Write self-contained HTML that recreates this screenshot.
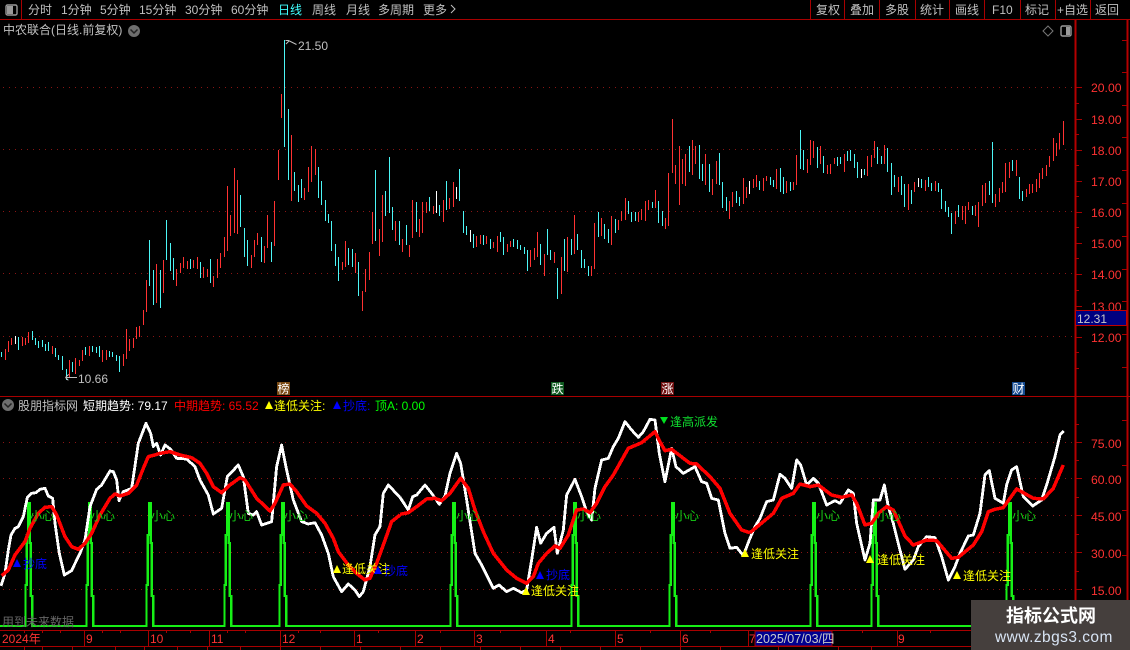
<!DOCTYPE html>
<html><head><meta charset="utf-8"><style>
html,body{margin:0;padding:0;background:#000;width:1130px;height:650px;overflow:hidden}
svg{display:block;position:absolute;left:0;top:0}
text{font-family:"Liberation Sans","WenQuanYi Zen Hei","Noto Sans CJK SC",sans-serif;font-size:12px}
.b{fill:none;stroke-width:1;shape-rendering:crispEdges}
.ax{fill:#ff3232;font-size:12.2px}
.t{fill:#c0c0c0}
.y{fill:#ffff00}.bl{fill:#0000ff}.g{fill:#00ff00}
.xin{fill:#16d016}
.d{fill:#ff3232;font-size:12px}
</style></head><body>
<svg width="1130" height="650" viewBox="0 0 1130 650">
<rect width="1130" height="650" fill="#000"/>
<!-- grid dotted -->
<g stroke="#8a1414" stroke-width="1" stroke-dasharray="1 5" shape-rendering="crispEdges">
<path d="M3 87.5H1075M3 149.5H1075M3 211.5H1075M3 273.5H1075M3 336.5H1075M3 442.5H1075M3 478.5H1075M3 515.5H1075M3 552.5H1075M3 589.5H1075"/>
</g>
<!-- candles -->
<path class="b" stroke="#ff3232" d="M5.5 349V360M8.5 341V352M11.5 338V345M22.5 337V346M25.5 338V345M28.5 332V343M52.5 346V354M69.5 360V377M75.5 358V374M79.5 360V366M82.5 350V361M89.5 346V356M102.5 350V362M106.5 350V360M123.5 354V366M126.5 329V359M129.5 339V351M133.5 338V348M136.5 327V339M139.5 326V337M143.5 310V325M146.5 280V312M156.5 264V303M163.5 260V293M176.5 269V286M180.5 263V273M183.5 257V268M187.5 261V269M193.5 260V268M197.5 257V269M203.5 267V278M207.5 269V277M213.5 276V287M217.5 259V278M220.5 253V268M224.5 237V257M227.5 186V251M230.5 215V236M234.5 168V233M237.5 180V234M251.5 255V268M254.5 240V257M257.5 233V245M264.5 246V263M267.5 215V248M274.5 201V246M278.5 150V180M281.5 94V118M291.5 135V201M304.5 188V200M308.5 167V192M311.5 146V182M315.5 149V175M342.5 262V270M345.5 241V267M355.5 253V273M362.5 291V311M365.5 269V292M369.5 252V280M372.5 212V244M379.5 229V256M382.5 195V242M395.5 221V241M402.5 239V252M409.5 245V257M412.5 200V238M419.5 219V237M422.5 202V233M426.5 202V213M433.5 206V214M443.5 200V222M449.5 198V209M453.5 182V207M476.5 236V247M480.5 235V244M486.5 236V244M493.5 242V248M497.5 236V252M507.5 244V252M510.5 241V247M530.5 250V267M534.5 248V260M537.5 232V257M544.5 254V276M554.5 252V263M561.5 257V294M567.5 237V272M574.5 215V254M591.5 266V276M594.5 223V269M601.5 218V236M611.5 216V245M618.5 220V230M621.5 211V221M625.5 198V220M638.5 212V222M641.5 209V220M645.5 201V221M648.5 200V210M655.5 190V208M665.5 218V229M668.5 173V226M672.5 119V173M675.5 165V184M679.5 146V205M682.5 159V184M685.5 154V186M692.5 140V175M695.5 146V164M705.5 154V185M712.5 179V195M716.5 161V184M729.5 201V219M732.5 192V207M743.5 178V204M746.5 187V198M753.5 179V188M756.5 175V187M763.5 178V191M766.5 176V181M776.5 169V189M786.5 181V193M793.5 182V190M796.5 155V185M807.5 159V173M810.5 140V165M813.5 141V158M820.5 146V164M827.5 165V174M830.5 164V174M834.5 158V164M844.5 154V172M867.5 156V176M871.5 155V167M874.5 141V158M884.5 145V164M898.5 177V192M908.5 184V210M914.5 182V192M925.5 180V191M935.5 181V191M955.5 211V224M962.5 206V220M965.5 206V224M968.5 202V210M975.5 205V216M978.5 202V227M982.5 185V206M985.5 183V203M995.5 194V207M999.5 188V202M1002.5 182V193M1005.5 163V192M1009.5 162V178M1016.5 160V176M1026.5 189V197M1029.5 184V194M1032.5 184V193M1036.5 179V192M1039.5 173V188M1042.5 168V179M1046.5 165V176M1049.5 156V167M1053.5 138V161M1056.5 143V156M1059.5 133V149M1063.5 121V145"/>
<path class="b" stroke="#4cf6f6" d="M1.5 352V357M18.5 337V350M32.5 331V340M35.5 338V345M38.5 341V348M42.5 340V347M45.5 344V351M48.5 342V351M55.5 348V357M58.5 355V360M62.5 356V370M66.5 369V380M72.5 362V372M85.5 347V355M92.5 346V352M96.5 347V353M99.5 346V357M109.5 351V357M112.5 352V357M116.5 355V361M119.5 356V372M149.5 240V286M153.5 270V305M160.5 270V308M166.5 220V260M170.5 243V271M173.5 258V280M190.5 259V269M200.5 262V278M210.5 259V283M240.5 195V227M244.5 228V257M247.5 240V266M261.5 237V262M271.5 242V262M284.5 40V147M288.5 109V180M294.5 172V191M298.5 185V202M301.5 179V198M318.5 167V198M321.5 181V205M325.5 200V221M328.5 214V223M331.5 221V251M335.5 244V266M338.5 257V281M348.5 248V265M352.5 249V267M358.5 262V296M375.5 170V241M385.5 191V216M389.5 157V213M392.5 207V230M399.5 221V245M406.5 225V245M416.5 202V232M429.5 197V211M439.5 205V216M446.5 181V210M459.5 169V201M463.5 211V233M466.5 226V235M473.5 234V248M483.5 235V245M490.5 239V249M500.5 232V242M503.5 237V255M513.5 239V247M517.5 240V249M520.5 245V250M524.5 247V254M527.5 250V271M540.5 244V265M547.5 229V255M550.5 250V260M557.5 268V299M564.5 239V271M571.5 239V255M577.5 234V250M581.5 250V268M584.5 259V268M588.5 266V276M598.5 212V237M604.5 224V239M608.5 229V243M615.5 219V233M628.5 201V214M631.5 212V222M635.5 212V221M652.5 202V208M658.5 201V223M662.5 211V226M689.5 146V172M699.5 145V179M702.5 164V181M709.5 164V192M719.5 153V185M722.5 182V208M726.5 197V211M736.5 191V203M739.5 197V206M759.5 181V190M770.5 177V185M773.5 180V187M780.5 168V192M783.5 177V194M790.5 182V191M800.5 130V169M803.5 150V170M817.5 147V168M823.5 156V173M837.5 157V166M840.5 157V164M847.5 151V161M850.5 150V161M854.5 154V168M857.5 162V178M864.5 169V175M877.5 147V164M881.5 156V164M887.5 148V172M891.5 163V195M894.5 175V187M901.5 176V195M904.5 184V207M911.5 190V204M921.5 179V188M928.5 177V187M931.5 183V191M938.5 183V192M941.5 189V209M945.5 201V212M948.5 207V217M951.5 213V234M958.5 205V217M972.5 206V215M989.5 181V195M992.5 142V203M1012.5 160V171M1019.5 177V199M1022.5 191V201"/>
<path class="b" stroke="#ffffff" d="M15.5 336V344M436.5 191V213M456.5 187V199M470.5 230V242M749.5 181V194M861.5 169V178M918.5 178V187"/>
<!-- extremes -->
<path d="M289 41l-3 3M285.5 40.5h3l8 4" fill="none" stroke="#c0c0c0" stroke-width="1"/>
<text x="298" y="50" class="t">21.50</text>
<path d="M65.5 377.5H77M65.5 377.5l3-3M65.5 377.5l3 3" fill="none" stroke="#c0c0c0" stroke-width="1" shape-rendering="crispEdges"/>
<text x="78" y="383" class="t">10.66</text>
<!-- signal badges -->
<rect x="277" y="382" width="13" height="13" fill="#7a4a14"/><text x="277.5" y="393" fill="#fff">榜</text>
<rect x="551" y="382" width="13" height="13" fill="#0f5a20"/><text x="551.5" y="393" fill="#fff">跌</text>
<rect x="661" y="382" width="13" height="13" fill="#701010"/><text x="661.5" y="393" fill="#fff">涨</text>
<rect x="1012" y="382" width="13" height="13" fill="#144a90"/><text x="1012.5" y="393" fill="#fff">财</text>
<!-- frame lines -->
<g stroke="#a80000" stroke-width="1" fill="none" shape-rendering="crispEdges">
<path d="M0 19.5H1130M21.5 0V19M810.5 0V19M844.5 0V19M879.5 0V19M915.5 0V19M949.5 0V19M984.5 0V19M1020.5 0V19M1055.5 0V19M1090.5 0V19"/>
<path d="M0 396.5H1130M0 630.5H971M0 646.5H971"/>
</g>
<g stroke="#b40000" stroke-width="1.6" fill="none" shape-rendering="crispEdges">
<path d="M1075.5 20V630M1127.5 20V650"/>
</g>
<g stroke="#a80000" stroke-width="1" fill="none" shape-rendering="crispEdges">
<path d="M1076 87.5h6M1076 119.5h6M1076 150.5h6M1076 181.5h6M1076 212.5h6M1076 243.5h6M1076 274.5h6M1076 306.5h6M1076 337.5h6M1076 103.5h3M1076 134.5h3M1076 165.5h3M1076 196.5h3M1076 227.5h3M1076 258.5h3M1076 290.5h3M1076 352.5h3M1076 368.5h3"/>
<path d="M1076 442.5h6M1076 478.5h6M1076 515.5h6M1076 552.5h6M1076 589.5h6M1076 424.5h3M1076 460.5h3M1076 497.5h3M1076 534.5h3M1076 571.5h3M1076 607.5h3"/>
<path d="M1122 40.5h5M1122 72.5h5M1122 105.5h5M1122 137.5h5M1122 170.5h5M1122 203.5h5M1122 236.5h5M1122 269.5h5M1122 301.5h5M1122 334.5h5M1122 367.5h5M1122 420.5h5M1122 465.5h5M1122 510.5h5M1122 555.5h5"/>
<path d="M24.5 630V633M42.5 630V633M60.5 630V633M84.5 630V646M102.5 630V633M120.5 630V633M148.5 630V646M166.5 630V633M190.5 630V633M209.5 630V646M227.5 630V633M245.5 630V633M280.5 630V646M298.5 630V633M320.5 630V633M354.5 630V646M378.5 630V633M415.5 630V646M440.5 630V633M474.5 630V646M500.5 630V633M546.5 630V646M570.5 630V633M615.5 630V646M650.5 630V633M680.5 630V646M710.5 630V633M748.5 630V646M790.5 630V633M862.5 630V633M897.5 630V646M930.5 630V633M24.5 646V650M42.5 646V650M72.5 646V650M115.5 646V650M144.5 646V650M177.5 646V650M207.5 646V650M240.5 646V650M280.5 646V650M320.5 646V650M360.5 646V650M400.5 646V650M440.5 646V650M480.5 646V650M520.5 646V650M560.5 646V650M600.5 646V650M640.5 646V650M680.5 646V650M720.5 646V650M778.5 646V650M838.5 646V650M871.5 646V650"/>
</g>
<!-- green spikes -->
<g fill="none" stroke="#16f016" stroke-width="2.4" shape-rendering="crispEdges">
<path d="M0 626H25.5V585H26.8V535H28V503H29.6V543H30.8V596H32.3V626H86.5V585H87.8V535H89V503H90.6V543H91.8V596H93.3V626H146.5V585H147.8V535H149V503H150.6V543H151.8V596H153.3V626H224.5V585H225.8V535H227V503H228.6V543H229.8V596H231.3V626H279.5V585H280.8V535H282V503H283.6V543H284.8V596H286.3V626H450.5V585H451.8V535H453V503H454.6V543H455.8V596H457.3V626H571.5V585H572.8V535H574V503H575.6V543H576.8V596H578.3V626H669.5V585H670.8V535H672V503H673.6V543H674.8V596H676.3V626H810.5V585H811.8V535H813V503H814.6V543H815.8V596H817.3V626H871.5V585H872.8V535H874V503H875.6V543H876.8V596H878.3V626H1006.5V585H1007.8V535H1009V503H1010.6V543H1011.8V596H1013.3V626H1030"/>
</g>
<!-- lines -->
<g fill="none" stroke-linejoin="round" shape-rendering="crispEdges">
<polyline transform="translate(0 410) scale(.3333)" stroke="#fff" stroke-width="8.5" fill="none" points="3,528 15,490 25,420 33,375 45,355 55,350 70,320 82,262 95,250 108,248 120,238 135,235 145,258 158,265 165,340 178,430 193,495 215,482 230,450 240,430 255,390 270,290 290,238 305,225 330,183 340,185 350,210 357,272 370,245 395,235 415,100 438,40 452,70 460,110 470,100 482,135 495,105 512,118 530,145 560,147 585,170 600,210 625,255 640,312 665,295 682,200 715,165 730,200 745,310 760,315 770,305 785,345 800,340 815,335 830,170 845,105 860,180 880,270 905,335 925,342 945,338 965,375 985,430 1000,500 1025,545 1045,522 1065,540 1078,560 1090,545 1110,470 1125,375 1140,350 1150,250 1165,225 1200,262"/>
<polyline transform="translate(400 410) scale(.3333)" stroke="#fff" stroke-width="8.5" fill="none" points="0,262 25,300 38,260 50,255 75,225 95,250 118,283 135,258 150,190 170,130 182,160 200,270 225,430 245,465 280,535 297,525 320,545 340,535 365,548 380,540 395,450 410,352 422,400 440,370 462,352 472,430 490,360 500,255 525,208 545,260 560,305 575,330 585,235 605,150 625,145 640,110 655,85 675,35 695,60 715,82 730,65 750,28 765,30 778,130 795,215 815,115 828,170 850,190 885,170 905,215 920,220 935,265 955,270 975,370 990,415 1010,412 1030,437 1050,385"/>
<polyline transform="translate(750 410) scale(.3333)" stroke="#fff" stroke-width="8.5" fill="none" points="0,385 15,350 30,325 50,275 70,270 90,193 105,205 125,235 140,150 152,165 170,225 190,205 205,220 230,285 255,272 270,280 295,240 310,250 320,340 345,450 360,400 370,270 390,270 403,225 415,290 430,340 450,420 465,478 490,450 505,410 530,380 555,383 575,440 595,510 615,470 630,430 655,378 670,375 690,310 705,195 718,182 735,265 760,280 770,225 785,180 800,170 820,260 848,288 875,270 890,225 915,140 930,75 942,63"/>
<polyline transform="translate(0 410) scale(.3333)" stroke="#f00" stroke-width="10.5" fill="none" points="5,497 25,480 45,435 75,395 90,355 115,310 135,292 155,290 170,315 195,380 215,410 235,418 255,400 275,370 300,315 330,265 345,252 360,258 385,250 410,225 430,175 445,140 465,135 480,130 510,125 540,135 575,143 600,160 620,190 640,230 665,248 690,225 720,203 735,210 770,265 810,303 825,280 850,225 870,222 890,245 920,288 950,310 975,340 1000,385 1015,425 1045,465 1070,490 1095,510 1110,505 1130,460 1150,405 1175,335 1200,315"/>
<polyline transform="translate(400 410) scale(.3333)" stroke="#f00" stroke-width="10.5" fill="none" points="0,313 25,308 50,290 80,267 105,265 125,272 150,250 182,205 205,235 225,300 250,365 280,430 320,480 350,505 380,520 400,500 415,460 440,430 465,408 480,415 505,375 530,300 550,297 570,308 590,280 615,230 640,195 685,115 725,98 765,65 780,95 795,122 815,118 870,160 890,162 930,200 960,235 990,310 1025,360 1050,368"/>
<polyline transform="translate(750 410) scale(.3333)" stroke="#f00" stroke-width="10.5" fill="none" points="0,368 40,335 70,310 95,265 130,250 150,222 180,230 205,225 245,255 275,262 305,255 320,280 345,345 365,340 385,310 410,290 430,300 465,378 490,405 530,390 560,392 605,445 625,442 670,405 695,365 715,305 735,298 760,293 800,237 850,265 880,267 910,235 940,165"/>
</g>
<!-- 小心 -->
<g>
<text x="30" y="520" class="xin">小心</text><text x="91" y="520" class="xin">小心</text><text x="151" y="520" class="xin">小心</text><text x="229" y="520" class="xin">小心</text><text x="284" y="520" class="xin">小心</text><text x="456" y="520" class="xin">小心</text><text x="577" y="520" class="xin">小心</text><text x="675" y="520" class="xin">小心</text><text x="816" y="520" class="xin">小心</text><text x="877" y="520" class="xin">小心</text><text x="1012" y="520" class="xin">小心</text>
</g>
<!-- signals -->
<path fill="#ffff00" d="M337 565l4 8h-8zM526 587l4 8h-8zM745 549l4 8h-8zM870 555l4 8h-8zM957 571l4 8h-8z"/>
<path fill="#0000ff" d="M17 559l4 8h-8zM540 571l4 8h-8z"/>
<text x="23" y="568" class="bl">抄底</text>
<text x="342" y="573" class="y">逢低关注</text>
<path fill="#0000ff" d="M378 566l4 8h-8z"/>
<text x="384" y="575" class="bl">抄底</text>
<text x="546" y="579" class="bl">抄底</text>
<text x="531" y="595" class="y">逢低关注</text>
<text x="751" y="558" class="y">逢低关注</text>
<text x="877" y="564" class="y">逢低关注</text>
<text x="963" y="580" class="y">逢低关注</text>
<path fill="#00e020" d="M660 417h8l-4 7z"/>
<text x="670" y="426" style="fill:#10e030">逢高派发</text>
<text x="2" y="626" style="fill:#666">用到未来数据</text>
<!-- toolbar -->
<rect x="6" y="5" width="11" height="10" rx="1.5" fill="none" stroke="#9a9a9a" stroke-width="1.4"/><rect x="7" y="6" width="6" height="8" fill="#9a9a9a"/>
<g>
<text x="28" y="14" class="t">分时</text><text x="61" y="14" class="t">1分钟</text><text x="100" y="14" class="t">5分钟</text><text x="139" y="14" class="t">15分钟</text><text x="185" y="14" class="t">30分钟</text><text x="231" y="14" class="t">60分钟</text>
<text x="278" y="14" style="fill:#40ffff">日线</text><text x="312" y="14" class="t">周线</text><text x="346" y="14" class="t">月线</text><text x="378" y="14" class="t">多周期</text><text x="423" y="14" class="t">更多</text>
<path d="M451 5l4 4-4 4" fill="none" stroke="#c0c0c0" stroke-width="1"/>
<text x="816" y="14" class="t">复权</text><text x="850" y="14" class="t">叠加</text><text x="885" y="14" class="t">多股</text><text x="920" y="14" class="t">统计</text><text x="955" y="14" class="t">画线</text><text x="992" y="14" class="t">F10</text><text x="1025" y="14" class="t">标记</text><text x="1057" y="14" class="t">+自选</text><text x="1095" y="14" class="t">返回</text>
</g>
<text x="3" y="34" class="t">中农联合(日线.前复权)</text>
<circle cx="134" cy="31" r="6" fill="#6e6e6e"/><path d="M130.5 29.5l3.5 3.5 3.5-3.5" fill="none" stroke="#222" stroke-width="1.5"/>
<path d="M1048 26l5 5-5 5-5-5z" fill="none" stroke="#777"/>
<rect x="1061" y="26" width="10" height="10" rx="1.5" fill="none" stroke="#9a9a9a" stroke-width="1.4"/><rect x="1066" y="27" width="4" height="8" fill="#9a9a9a"/>
<!-- price axis -->
<g>
<text x="1091" y="92" class="ax">20.00</text><text x="1091" y="124" class="ax">19.00</text><text x="1091" y="155" class="ax">18.00</text><text x="1091" y="186" class="ax">17.00</text><text x="1091" y="217" class="ax">16.00</text><text x="1091" y="248" class="ax">15.00</text><text x="1091" y="279" class="ax">14.00</text><text x="1091" y="311" class="ax">13.00</text><text x="1091" y="342" class="ax">12.00</text>
<text x="1091" y="448" class="ax">75.00</text><text x="1091" y="484" class="ax">60.00</text><text x="1091" y="521" class="ax">45.00</text><text x="1091" y="558" class="ax">30.00</text><text x="1091" y="595" class="ax">15.00</text>
</g>
<rect x="1075.5" y="310.5" width="51" height="15" fill="#000080" stroke="#c00000"/>
<text x="1077" y="323" style="fill:#c8c8c8;font-size:12px">12.31</text>
<!-- lower header -->
<circle cx="8" cy="405" r="6" fill="#6e6e6e"/><path d="M4.5 403.5l3.5 3.5 3.5-3.5" fill="none" stroke="#222" stroke-width="1.5"/>
<text x="18" y="410" class="t">股朋指标网</text>
<text x="83" y="410" fill="#fff">短期趋势: 79.17</text>
<text x="174" y="410" fill="#f00">中期趋势: 65.52</text>
<path fill="#ffff00" d="M269 401l4 8h-8z"/><text x="274" y="410" class="y">逢低关注:</text>
<path fill="#0000ff" d="M337 401l4 8h-8z"/><text x="343" y="410" class="bl">抄底:</text>
<text x="375" y="410" class="g">顶A: 0.00</text>
<!-- date axis -->
<text x="2" y="643" class="d">2024年</text><text x="86" y="643" class="d">9</text><text x="150" y="643" class="d">10</text><text x="211" y="643" class="d">11</text><text x="282" y="643" class="d">12</text><text x="356" y="643" class="d">1</text><text x="417" y="643" class="d">2</text><text x="476" y="643" class="d">3</text><text x="548" y="643" class="d">4</text><text x="617" y="643" class="d">5</text><text x="682" y="643" class="d">6</text><text x="749" y="643" class="d">7</text><text x="898" y="643" class="d">9</text>
<rect x="755" y="631" width="77" height="15" fill="#000090" stroke="#a80000"/>
<text x="756" y="643" style="fill:#c8c8c8;font-size:12.5px">2025/07/03/四</text>
<!-- watermark -->
<rect x="971" y="600" width="159" height="50" fill="#453f3d"/>
<text x="1006" y="622" style="fill:#fff;font-size:18px;font-weight:bold">指标公式网</text>
<text x="995" y="642" style="fill:#d8e4f4;font-size:15.5px;letter-spacing:.45px">www.zbgs3.com</text>
</svg>
</body></html>
